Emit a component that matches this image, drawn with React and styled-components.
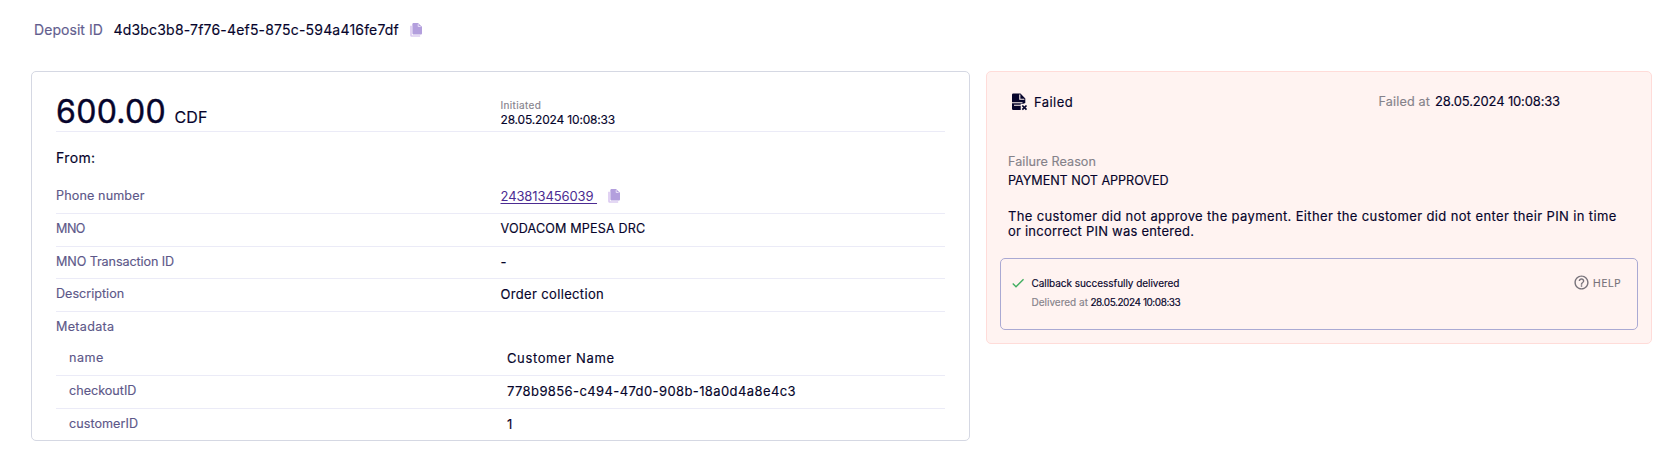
import React from "react";
import styled, { createGlobalStyle } from "styled-components";
import { MdCheck, MdHelpOutline } from "react-icons/md";

const GlobalStyle = createGlobalStyle`
  *, *::before, *::after { box-sizing: border-box; }
  body {
    margin: 0;
    background: #fff;
    color: #06042b;
    font-family: Inter, "Open Sans", sans-serif;
    font-size: 13px;
    -webkit-text-stroke: 0.15px currentColor;
  }
`;

const Page = styled.div`
  width: 1673px;
  min-height: 470px;
  padding: 20px 21px 0 31px;
`;

const Header = styled.header`
  display: flex;
  align-items: center;
  height: 20px;
  padding-left: 3px;
  margin-bottom: 31px;
  font-size: 14px;
  line-height: 20px;
`;

const HeaderLabel = styled.span`
  width: 79.5px;
  color: #625d8e;
  letter-spacing: 0.06px;
`;

const HeaderValue = styled.span`
  letter-spacing: 0.19px;
  margin-right: 11px;
`;

const Columns = styled.main`
  display: grid;
  grid-template-columns: 939px 666px;
  column-gap: 16px;
  align-items: start;
`;

const DetailsCard = styled.section`
  height: 370px;
  padding: 0 24px;
  border: 1px solid #d5d8e3;
  border-radius: 5px;
`;

const AmountRow = styled.div`
  display: grid;
  grid-template-columns: 1fr 1fr;
  align-items: end;
  height: 60px;
  border-bottom: 1px solid #ebebf7;
`;

const Amount = styled.div`
  display: flex;
  align-items: baseline;
  gap: 8.5px;
  padding-bottom: 1px;
  font-size: 32px;
  line-height: 36px;
  letter-spacing: 0.3px;
  -webkit-text-stroke-width: 0.4px;
`;

const Currency = styled.span`
  font-size: 16px;
  line-height: 18px;
  letter-spacing: 0.1px;
  -webkit-text-stroke-width: 0.15px;
`;

const Initiated = styled.div`
  padding-bottom: 3px;
  font-size: 12px;
  line-height: 16px;
  letter-spacing: -0.18px;
`;

const InitiatedLabel = styled.div`
  color: #85828c;
  font-size: 10px;
  line-height: 14px;
  letter-spacing: 0.35px;
`;

const SectionTitle = styled.h2`
  margin: 16px 0 13.33px;
  font-size: 14px;
  font-weight: 400;
  line-height: 20px;
  letter-spacing: 0.38px;
`;

const Row = styled.div`
  display: grid;
  grid-template-columns: 1fr 1fr;
  height: ${(p) => (p.$heading ? "31.3px" : "32.67px")};
  padding-top: 5px;
  padding-left: ${(p) => (p.$nested ? "13px" : "0")};
  border-bottom: ${(p) => (p.$plain ? "0" : "1px solid #ebebf7")};
  line-height: 20px;
`;

const Label = styled.span`
  color: #5d5889;
  font-size: 12.6px;
  letter-spacing: ${(p) => p.$tracking ?? 0}px;
`;

const Value = styled.span`
  display: flex;
  align-items: center;
  height: 20px;
  font-size: ${(p) => p.$size ?? 13}px;
  letter-spacing: ${(p) => p.$tracking ?? 0}px;
`;

const PhoneLink = styled.a`
  margin-right: 11px;
  color: #4c2c92;
  white-space: pre;
  text-decoration: underline;
  text-underline-offset: 2px;
  text-decoration-thickness: 1px;
  text-decoration-skip-ink: none;
  -webkit-text-stroke-width: 0;
`;

const FailureCard = styled.section`
  height: 273px;
  padding: 0 13px;
  border: 1px solid #ffdcd9;
  border-radius: 5px;
  background: #fff3f1;
`;

const StatusRow = styled.div`
  display: flex;
  align-items: center;
  height: 59px;
  padding: 0 78px 0 11px;
  line-height: 20px;
`;

const Status = styled.span`
  margin-left: 6px;
  letter-spacing: 0.42px;
`;

const FailedAt = styled.span`
  margin-left: auto;
  letter-spacing: -0.15px;
`;

const Muted = styled.span`
  margin-right: 5px;
  color: #85828a;
  font-size: 12.6px;
  letter-spacing: 0.16px;
`;

const Failure = styled.div`
  margin-top: 21px;
  padding-left: 8px;
`;

const FailureLabel = styled.div`
  color: #85828a;
  font-size: 12.6px;
  line-height: 19px;
  letter-spacing: 0.05px;
`;

const FailureCode = styled.div`
  font-size: 12.6px;
  line-height: 19px;
  letter-spacing: -0.04px;
`;

const FailureText = styled.p`
  margin: 19px 0;
  line-height: 15px;
  letter-spacing: 0.36px;
`;

const FailureTail = styled.span`
  letter-spacing: 0.22px;
`;

const CallbackBox = styled.div`
  display: flex;
  align-items: flex-start;
  height: 72px;
  padding: 15px 16px 0 9px;
  border: 1px solid #aaa9d3;
  border-radius: 5px;
`;

const CheckIcon = styled(MdCheck)`
  margin-top: 1px;
  color: #41ae60;
`;

const CallbackText = styled.div`
  margin-left: 5.5px;
  font-size: 10px;
  line-height: 19px;
`;

const CallbackTitle = styled.div`
  letter-spacing: -0.04px;
`;

const DeliveredLabel = styled.span`
  margin-right: 2.5px;
  color: #85828a;
`;

const DeliveredTime = styled.span`
  letter-spacing: -0.44px;
`;

const Help = styled.button`
  display: flex;
  align-items: center;
  gap: 3px;
  height: 17px;
  margin-left: auto;
  padding: 0;
  border: 0;
  background: none;
  color: #77727a;
  font: 11px/17px "Open Sans", sans-serif;
  letter-spacing: 0.4px;
`;

function CopyIcon() {
  return (
    <svg width="12" height="14" viewBox="0 0 12 14" aria-hidden="true">
      <path d="M1 2.800v9.500a.7.7 0 0 0 .7.7h8.500" fill="none" stroke="#dccbf1" strokeWidth="1.700" />
      <path d="M3.700 0H8l4 3.700v6.500c0 .8-.5 1.300-1.300 1.300h-7c-.8 0-1.300-.5-1.300-1.300V1.300C2.400.5 2.900 0 3.700 0Z" fill="#b39fdd" />
      <path d="M8.200 1.200v2.300h2.400" fill="none" stroke="#eee7f9" strokeWidth="0.900" />
    </svg>
  );
}

function FailedIcon() {
  return (
    <svg width="17" height="18" viewBox="0 0 17 18" aria-hidden="true">
      <path d="M2.300.5H9.500L14.300 5.500V10L10 12V17H2.300A1.300 1.300 0 0 1 1 15.700V1.800A1.300 1.300 0 0 1 2.300.5Z" fill="#06042b" />
      <path d="M8.800 1.500V6.200h4.600M1 9.700h10.500M3 12.300h7" fill="none" stroke="#fff3f1" strokeWidth="1.100" />
      <path d="M9.700 10.800h7.300V18H9.700Z" fill="#fff3f1" />
      <path d="m11.300 12.500 4.200 4.200m0-4.200-4.200 4.200" stroke="#06042b" strokeWidth="1.700" />
    </svg>
  );
}

export default function App() {
  return (
    <>
      <GlobalStyle />
      <Page>
        <Header>
          <HeaderLabel>Deposit ID</HeaderLabel>
          <HeaderValue>4d3bc3b8-7f76-4ef5-875c-594a416fe7df</HeaderValue>
          <CopyIcon />
        </Header>
        <Columns>
          <DetailsCard>
            <AmountRow>
              <Amount>
                600.00 <Currency>CDF</Currency>
              </Amount>
              <Initiated>
                <InitiatedLabel>Initiated</InitiatedLabel>
                28.05.2024 10:08:33
              </Initiated>
            </AmountRow>
            <SectionTitle>From:</SectionTitle>
            <Row>
              <Label $tracking={0.12}>Phone number</Label>
              <Value $tracking={-0.1}>
                <PhoneLink>{"243813456039 "}</PhoneLink>
                <CopyIcon />
              </Value>
            </Row>
            <Row>
              <Label $tracking={-0.5}>MNO</Label>
              <Value $size={12.6} $tracking={0.16}>VODACOM MPESA DRC</Value>
            </Row>
            <Row>
              <Label $tracking={-0.1}>MNO Transaction ID</Label>
              <Value>-</Value>
            </Row>
            <Row>
              <Label>Description</Label>
              <Value $tracking={0.34}>Order collection</Value>
            </Row>
            <Row $heading $plain>
              <Label $tracking={0.31}>Metadata</Label>
            </Row>
            <Row $nested>
              <Label $tracking={0.5}>name</Label>
              <Value $tracking={0.62}>Customer Name</Value>
            </Row>
            <Row $nested>
              <Label>checkoutID</Label>
              <Value $tracking={0.4}>778b9856-c494-47d0-908b-18a0d4a8e4c3</Value>
            </Row>
            <Row $nested $plain>
              <Label $tracking={0.04}>customerID</Label>
              <Value>1</Value>
            </Row>
          </DetailsCard>
          <FailureCard>
            <StatusRow>
              <FailedIcon />
              <Status>Failed</Status>
              <FailedAt>
                <Muted>Failed at</Muted>
                28.05.2024 10:08:33
              </FailedAt>
            </StatusRow>
            <Failure>
              <FailureLabel>Failure Reason</FailureLabel>
              <FailureCode>PAYMENT NOT APPROVED</FailureCode>
              <FailureText>
                The customer did not approve the payment. Either the customer did not enter their PIN in time
                <br />
                <FailureTail>or incorrect PIN was entered.</FailureTail>
              </FailureText>
            </Failure>
            <CallbackBox>
              <CheckIcon size={16} />
              <CallbackText>
                <CallbackTitle>Callback successfully delivered</CallbackTitle>
                <DeliveredLabel>Delivered at</DeliveredLabel>
                <DeliveredTime>28.05.2024 10:08:33</DeliveredTime>
              </CallbackText>
              <Help type="button">
                <MdHelpOutline size={17} />
                HELP
              </Help>
            </CallbackBox>
          </FailureCard>
        </Columns>
      </Page>
    </>
  );
}
